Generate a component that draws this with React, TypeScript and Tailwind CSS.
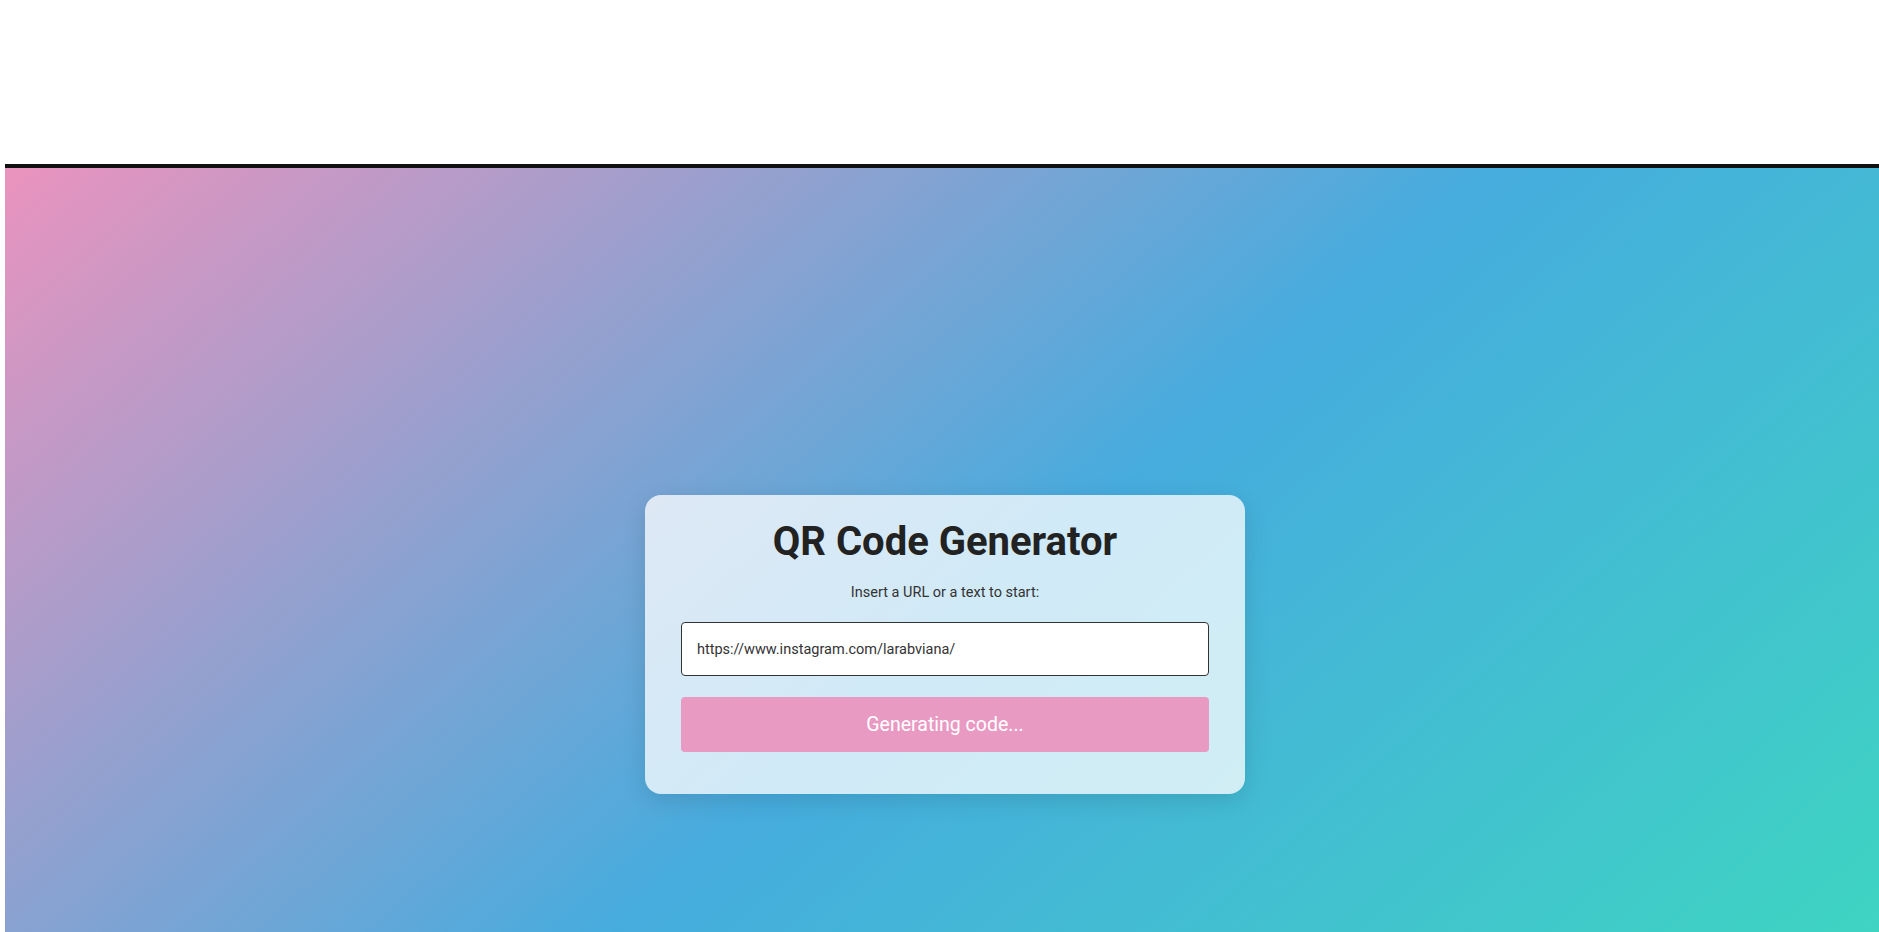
import React from "react";

export default function App() {
  return (
    <div className="min-h-screen w-full bg-white" style={{ fontFamily: "Roboto, 'Liberation Sans', sans-serif" }}>
      <div className="h-[164px] w-full bg-white" />
      <div className="pl-[5px]">
        <section className="h-[768px] w-full border-t-4 border-[#111111] bg-[linear-gradient(139deg,#ea93be_0%,#46acde_54%,#3ed4c2_100%)] flex justify-center pt-[327px] pl-[6px]">
          <div className="w-[600px] h-[299px] rounded-[16px] bg-white/75 shadow-[0_6px_24px_rgba(0,0,0,0.12)] px-[36px] pt-[25px] flex flex-col">
            <h1 className="text-center text-[40px] leading-[43px] font-bold text-[#222222]">QR Code Generator</h1>
            <p className="mt-[21px] text-center text-[14.5px] leading-[17px] text-[#333333]">Insert a URL or a text to start:</p>
            <input
              readOnly
              value="https://www.instagram.com/larabviana/"
              className="mt-[21px] h-[54px] w-full rounded-[4px] border border-[#333333] bg-white px-[15px] text-[14.5px] text-[#333333] outline-none"
            />
            <button className="mt-[21px] h-[55px] w-full rounded-[4px] bg-[#e99ac3] text-[19.5px] text-white">
              Generating code...
            </button>
          </div>
        </section>
      </div>
    </div>
  );
}
